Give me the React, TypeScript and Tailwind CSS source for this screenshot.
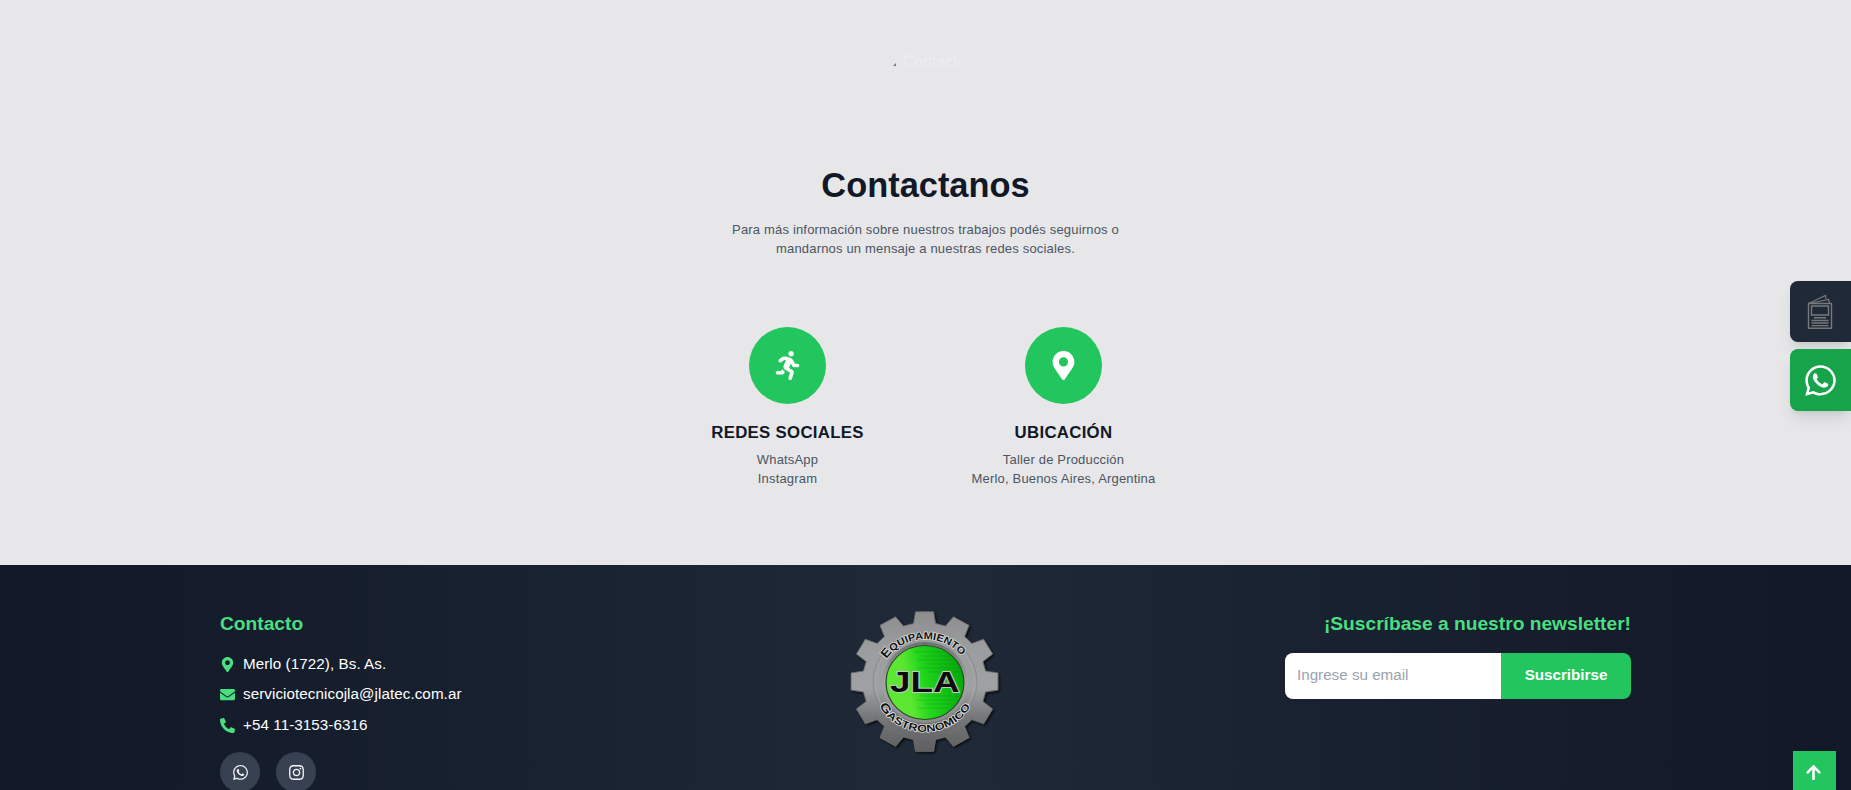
import React from "react";
import { FaRunning, FaMapMarkerAlt, FaEnvelope, FaPhoneAlt, FaWhatsapp, FaInstagram, FaArrowUp } from "react-icons/fa";

function gearPath(cx: number, cy: number): string {
  const teeth = 12;
  const squash = 0.95;
  const outer = 74;
  const inner = 62;
  const spots: [number, number][] = [
    [-10.2, inner],
    [-7, outer],
    [7, outer],
    [10.2, inner],
  ];
  const parts: string[] = [];
  for (let i = 0; i < teeth; i++) {
    const mid = i * 30 - 90;
    for (const [offset, radius] of spots) {
      const a = ((mid + offset) * Math.PI) / 180;
      const x = cx + Math.cos(a) * radius;
      const y = cy + Math.sin(a) * radius * squash;
      parts.push(`${parts.length ? "L" : "M"}${x.toFixed(2)} ${y.toFixed(2)}`);
    }
  }
  return parts.join(" ") + "Z";
}

function Logo() {
  return (
    <svg width="160" height="150" viewBox="15 20 160 150" className="block overflow-visible" aria-label="JLA Equipamiento Gastronómico">
      <defs>
        <linearGradient id="metal" x1="0" y1="0" x2="0" y2="1">
          <stop offset="0" stopColor="#8d8d8e" />
          <stop offset="0.25" stopColor="#9b9c9e" />
          <stop offset="0.55" stopColor="#a0a1a3" />
          <stop offset="0.75" stopColor="#77787a" />
          <stop offset="1" stopColor="#5f5f60" />
        </linearGradient>
        <linearGradient id="ring" x1="0" y1="0" x2="0" y2="1">
          <stop offset="0" stopColor="#707173" />
          <stop offset="0.5" stopColor="#a5a6a8" />
          <stop offset="1" stopColor="#8b8c8e" />
        </linearGradient>
        <linearGradient id="green" x1="0" y1="0.6" x2="1" y2="0.4">
          <stop offset="0" stopColor="#5fe634" />
          <stop offset="0.28" stopColor="#5be72f" />
          <stop offset="0.5" stopColor="#20d51c" />
          <stop offset="1" stopColor="#04a80c" />
        </linearGradient>
        <clipPath id="disc">
          <ellipse cx="95" cy="92.5" rx="38.5" ry="36.5" />
        </clipPath>
        <filter id="drop" x="-10%" y="-10%" width="125%" height="125%">
          <feDropShadow dx="1.5" dy="1.5" stdDeviation="1" floodColor="#000" floodOpacity="0.75" />
        </filter>
        <path id="arcTop" d="M56.5 69 A46 43 0 0 1 134 69" />
        <path id="arcBottom" d="M49.3 116 A52 49.3 0 0 0 140.7 116" />
      </defs>
      <path d={gearPath(94.5, 91.5)} fill="url(#metal)" stroke="#6c6c6d" strokeWidth="0.8" strokeLinejoin="round" filter="url(#drop)" />
      <ellipse cx="95" cy="92" rx="52" ry="49.5" fill="none" stroke="#85868a" strokeWidth="0.8" />
      <ellipse cx="95" cy="92" rx="49.5" ry="47" fill="none" stroke="#a9aaab" strokeWidth="0.8" />
      <ellipse cx="95" cy="92.5" rx="41" ry="39" fill="none" stroke="url(#ring)" strokeWidth="3" />
      <ellipse cx="95" cy="92.5" rx="39" ry="37" fill="url(#green)" stroke="#2d4a2b" strokeWidth="1.2" />
      <path
        clipPath="url(#disc)"
        stroke="#087f0c"
        strokeWidth="0.6"
        opacity="0.4"
        d="M84 62H122M92 66H130M88 70H134M96 74H136M87 78H134M98 82H140M90 106H132M86 110H128M94 114H126M88 118H122"
      />
      <g className="font-['Liberation_Sans']" fontSize="10" fontWeight="700" fill="#111" stroke="#dedede" strokeWidth="1.5" paintOrder="stroke" strokeLinejoin="round">
        <text>
          <textPath href="#arcTop" textLength="86" lengthAdjust="spacingAndGlyphs">
            <tspan fontSize="12.5">E</tspan>QUIPAMIENTO
          </textPath>
        </text>
        <text>
          <textPath href="#arcBottom" textLength="109" lengthAdjust="spacingAndGlyphs">
            <tspan fontSize="12">G</tspan>ASTRONOMICO
          </textPath>
        </text>
      </g>
      <text x="60" y="102.300" textLength="69.500" lengthAdjust="spacingAndGlyphs" fontSize="29" fontWeight="700" fill="#0c0c0c" stroke="#c3cbc3" strokeWidth="1.8" paintOrder="stroke" className="font-['Liberation_Sans']">
        JLA
      </text>
    </svg>
  );
}

function CatalogIcon() {
  return (
    <svg width="26" height="36" viewBox="0 0 26 36" fill="none" stroke="#76787a" strokeWidth="1.4" className="mr-[1px] block">
      <path d="M1.500 9.500H24.500V34.300H1.500ZM4.500 12H21.500V21H4.500Z" />
      <path d="M1.500 9.500L18.500 1.500L19 5M5 9L21.500 5.500L22.500 9" strokeWidth="1.200" />
      <path d="M7 23.700H19M4.500 26.500H21.500M4.500 29H21.500M4.500 31.600H21.500" />
    </svg>
  );
}

function Feature({ icon, title, lines }: { icon: React.ReactNode; title: string; lines: string[] }) {
  return (
    <div className="flex w-[184px] flex-col items-center">
      <div className="flex size-[77px] items-center justify-center rounded-full bg-[#22c55e] text-[29px] text-white">{icon}</div>
      <h3 className="mt-[16px] text-[16.8px] leading-[26px] font-bold tracking-[0.3px] whitespace-nowrap text-[#111827]">{title}</h3>
      <div className="mt-[4px] text-center text-[13px] leading-[19px] tracking-[0.18px] whitespace-nowrap text-[#4b5563]">
        {lines.map((l) => (
          <p key={l}>{l}</p>
        ))}
      </div>
    </div>
  );
}

export default function App() {
  return (
    <div className="relative flex h-[790px] w-full flex-col overflow-hidden bg-[#e7e7e9] font-['Liberation_Sans',Arial,sans-serif]">
      <main className="flex h-[565px] shrink-0 flex-col items-center">
        <div className="mt-[50px] ml-[8px] flex h-6 w-[74px] items-center text-[16px] leading-6 text-[#eeeeef]">
          <svg width="3" height="3" viewBox="0 0 3 3" className="mt-[5px] mr-[7px] shrink-0">
            <path d="M3 0V3H0Z" fill="#77797b" />
          </svg>
          <span className="[clip-path:polygon(0_0,90%_0,90%_60%,96%_72%,96%_100%,0_100%)]">Contacto</span>
        </div>
        <h1 className="mt-[91px] text-[34.4px] leading-[40px] font-bold text-[#111827]">Contactanos</h1>
        <p className="mt-[15px] text-center text-[13px] leading-[19px] tracking-[0.18px] whitespace-nowrap text-[#4b5563]">
          Para más información sobre nuestros trabajos podés seguirnos o
          <br />
          mandarnos un mensaje a nuestras redes sociales.
        </p>
        <div className="mt-[69px] flex gap-[92px]">
          <Feature icon={<FaRunning />} title="REDES SOCIALES" lines={["WhatsApp", "Instagram"]} />
          <Feature icon={<FaMapMarkerAlt />} title="UBICACIÓN" lines={["Taller de Producción", "Merlo, Buenos Aires, Argentina"]} />
        </div>
      </main>

      <footer className="flex h-[225px] shrink-0 justify-center bg-linear-to-r from-[#111827] via-[#1f2937] to-[#111827]">
        <div className="grid w-[1411px] grid-cols-3 pt-[45px]">
          <div>
            <h2 className="text-[19.2px] leading-[28px] font-bold text-[#4ade80]">Contacto</h2>
            <ul className="mt-[11px] text-[15.2px] tracking-[0.07px] text-white">
              <li className="flex h-[30.5px] items-center gap-2">
                <FaMapMarkerAlt className="w-[15px] text-[#4ade80]" />
                <span>Merlo (1722), Bs. As.</span>
              </li>
              <li className="flex h-[30.5px] items-center gap-2">
                <FaEnvelope className="w-[15px] text-[#4ade80]" />
                <span>serviciotecnicojla@jlatec.com.ar</span>
              </li>
              <li className="flex h-[30.5px] items-center gap-2">
                <FaPhoneAlt className="w-[15px] text-[#4ade80]" />
                <span>+54 11-3153-6316</span>
              </li>
            </ul>
            <div className="mt-[11.5px] flex gap-4 text-[#f3f4f6]">
              <span className="flex size-10 items-center justify-center rounded-full bg-[#374151] pl-px">
                <FaWhatsapp size={17} />
              </span>
              <span className="flex size-10 items-center justify-center rounded-full bg-[#374151]">
                <FaInstagram size={17} />
              </span>
            </div>
          </div>
          <div className="flex items-start justify-center">
            <Logo />
          </div>
          <div className="flex flex-col items-end">
            <h2 className="text-[19.2px] leading-[28px] font-bold whitespace-nowrap text-[#4ade80]">¡Suscríbase a nuestro newsletter!</h2>
            <form className="mt-[15px] flex h-[46px] w-[346px] overflow-hidden rounded-lg">
              <input placeholder="Ingrese su email" className="w-[216px] bg-white px-3 pb-[2px] text-[15.2px] placeholder:text-[#9ca3af]" />
              <button type="button" className="w-[130px] bg-[#22c55e] pb-[2px] text-[15.2px] font-bold text-white">
                Suscribirse
              </button>
            </form>
          </div>
        </div>
      </footer>

      <aside className="absolute top-[281px] right-0 flex w-[61px] flex-col gap-[7px]">
        <button className="flex h-[61px] items-center justify-center rounded-l-lg bg-[#1f2937] shadow-lg">
          <CatalogIcon />
        </button>
        <button className="flex h-[62px] items-center justify-center rounded-l-lg bg-[#16a34a] text-white shadow-lg">
          <FaWhatsapp size={35} />
        </button>
      </aside>
      <button className="absolute top-[751px] right-[15px] flex size-[43px] items-center justify-center bg-[#22c55e] pr-[2px] text-white">
        <FaArrowUp size={17} />
      </button>
    </div>
  );
}
